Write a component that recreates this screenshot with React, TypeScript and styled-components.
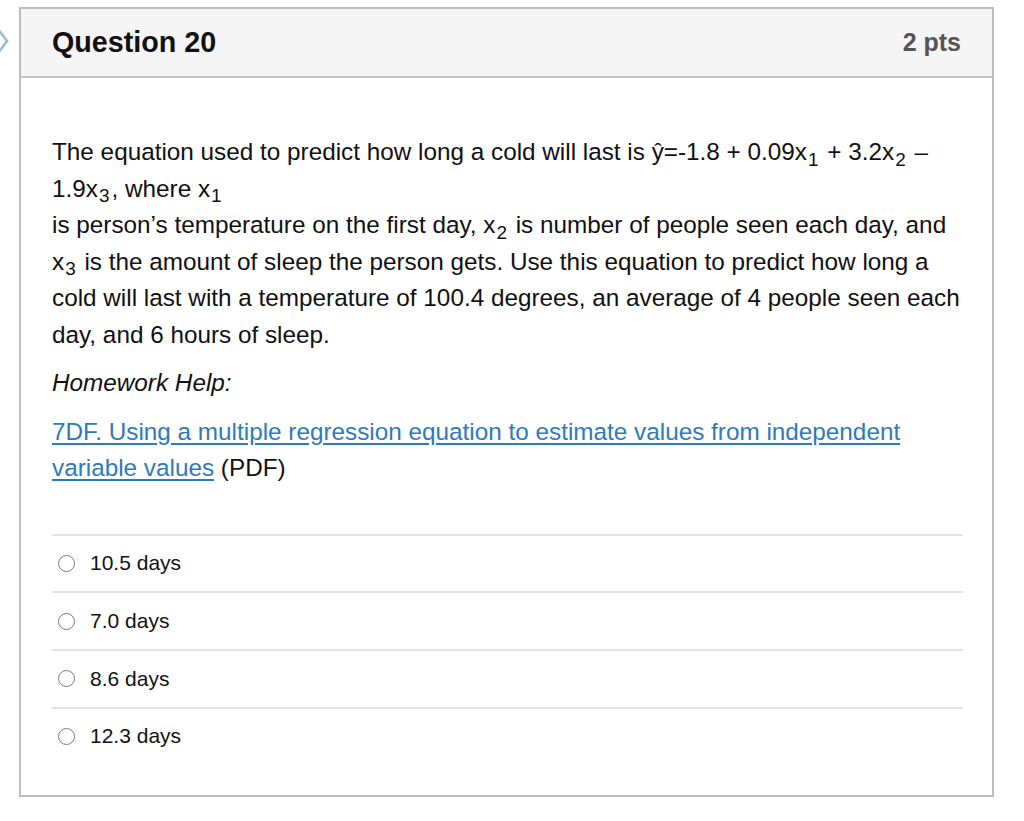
import styled, { createGlobalStyle } from 'styled-components'

const GlobalStyle = createGlobalStyle`
  html, body {
    margin: 0;
    padding: 0;
    background: #ffffff;
  }
  body {
    font-family: 'Liberation Sans', Arial, Helvetica, sans-serif;
    color: #111111;
  }
`

const answers = ['10.5 days', '7.0 days', '8.6 days', '12.3 days']

const App = () => {
  return (
    <>
      <GlobalStyle />
      <Page>
        <Flag viewBox="0 0 16 26" aria-hidden="true">
          <polyline points="-2,1 7,13 -2,25" />
        </Flag>
        <Card>
          <Header>
            <Title>Question 20</Title>
            <Points>2 pts</Points>
          </Header>
          <Body>
            <Text>
              The equation used to predict how long a cold will last is ŷ=-1.8 + 0.09x
              <Sub>1</Sub> + 3.2x<Sub>2</Sub> – 1.9x<Sub>3</Sub>, where x<Sub>1</Sub>
              <br />
              is person’s temperature on the first day, x<Sub>2</Sub> is number of people
              seen each day, and x<Sub>3</Sub> is the amount of sleep the person gets. Use
              this equation to predict how long a cold will last with a temperature of
              100.4 degrees, an average of 4 people seen each day, and 6 hours of sleep.
            </Text>
            <Text>
              <em>Homework Help:</em>
            </Text>
            <Text>
              <Link href="#">
                7DF. Using a multiple regression equation to estimate values from
                independent variable values
              </Link>{' '}
              (PDF)
            </Text>
            <Answers>
              {answers.map((answer) => (
                <Answer key={answer}>
                  <Radio type="radio" name="q20" />
                  <AnswerLabel>{answer}</AnswerLabel>
                </Answer>
              ))}
            </Answers>
          </Body>
        </Card>
      </Page>
    </>
  )
}

export default App

const Page = styled.div`
  position: relative;
  padding: 7px 30px 24px 19px;
`

const Flag = styled.svg`
  position: absolute;
  left: 0;
  top: 28px;
  width: 16px;
  height: 26px;
  fill: none;
  stroke: #9fbcd3;
  stroke-width: 2.6;
`

const Card = styled.div`
  width: 971px;
  border: 2px solid #bcbcbc;
  background: #ffffff;
`

const Header = styled.div`
  height: 67px;
  display: flex;
  align-items: center;
  justify-content: space-between;
  padding: 0 31px 0 31px;
  background: #f5f5f5;
  border-bottom: 2px solid #c4c4c4;
`

const Title = styled.h2`
  margin: 0;
  font-size: 28.7px;
  font-weight: 700;
  color: #111111;
`

const Points = styled.span`
  font-size: 25px;
  font-weight: 700;
  color: #555555;
`

const Body = styled.div`
  padding: 56px 29px 31px 31px;
`

const Text = styled.p`
  margin: 0 -4px 12px 0;
  font-size: 24.3px;
  line-height: 36.5px;
  color: #111111;

  em {
    font-style: italic;
  }
`

const Sub = styled.sub`
  font-size: 0.78em;
  line-height: 0;
  vertical-align: -0.3em;
  margin: 0 2px 0 1px;
`

const Link = styled.a`
  color: #2d7bbd;
  text-decoration: underline;
  text-underline-offset: 3px;
`

const Answers = styled.div`
  margin-top: 47px;
`

const Answer = styled.label`
  display: flex;
  align-items: center;
  gap: 15px;
  height: 55.7px;
  padding-left: 6px;
  border-top: 2px solid #e3e3e3;
`

const Radio = styled.input`
  appearance: none;
  margin: 0;
  width: 17px;
  height: 17px;
  border: 1.5px solid #7a7a7a;
  border-radius: 50%;
  background: #ffffff;
`

const AnswerLabel = styled.span`
  font-size: 21px;
  color: #111111;
`
